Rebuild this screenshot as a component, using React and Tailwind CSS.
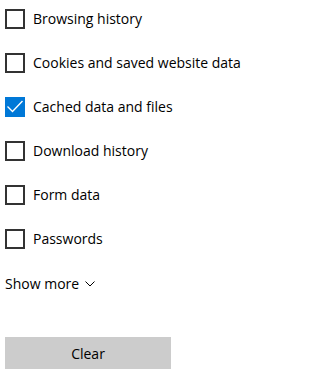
const items = [
  { label: "Browsing history", checked: false },
  { label: "Cookies and saved website data", checked: false },
  { label: "Cached data and files", checked: true },
  { label: "Download history", checked: false },
  { label: "Form data", checked: false },
  { label: "Passwords", checked: false },
];

function Box({ checked }) {
  if (checked) {
    return (
      <span className="flex h-5 w-5 shrink-0 items-center justify-center bg-[#0078d7]">
        <svg width="20" height="20" viewBox="0 0 20 20" fill="none">
          <path d="M2.5 9.5l5 5 10-10.5" stroke="#fff" strokeWidth="1.4" />
        </svg>
      </span>
    );
  }
  return <span className="h-5 w-5 shrink-0 border-2 border-[#333333] bg-white" />;
}

export default function App() {
  return (
    <div
      className="h-[374px] w-[269px] bg-white pl-[5px] pt-[9px] text-[14px] text-black"
      style={{ fontFamily: '"Open Sans", "Noto Sans", sans-serif' }}
    >
      <div className="flex flex-col gap-6">
        {items.map((item) => (
          <label key={item.label} className="flex h-5 items-center gap-2">
            <Box checked={item.checked} />
            <span className="whitespace-nowrap leading-5">{item.label}</span>
          </label>
        ))}
      </div>
      <div className="mt-6 flex h-5 items-center gap-1.5">
        <span>Show more</span>
        <svg width="10" height="6" viewBox="0 0 10 6" fill="none" className="mt-0.5">
          <path d="M0.5 0.5l4.5 4.5 4.5-4.5" stroke="#000" strokeWidth="1" />
        </svg>
      </div>
      <button className="mt-[44px] flex h-8 w-[166px] items-center justify-center bg-[#cccccc] text-[14px]">
        Clear
      </button>
    </div>
  );
}
